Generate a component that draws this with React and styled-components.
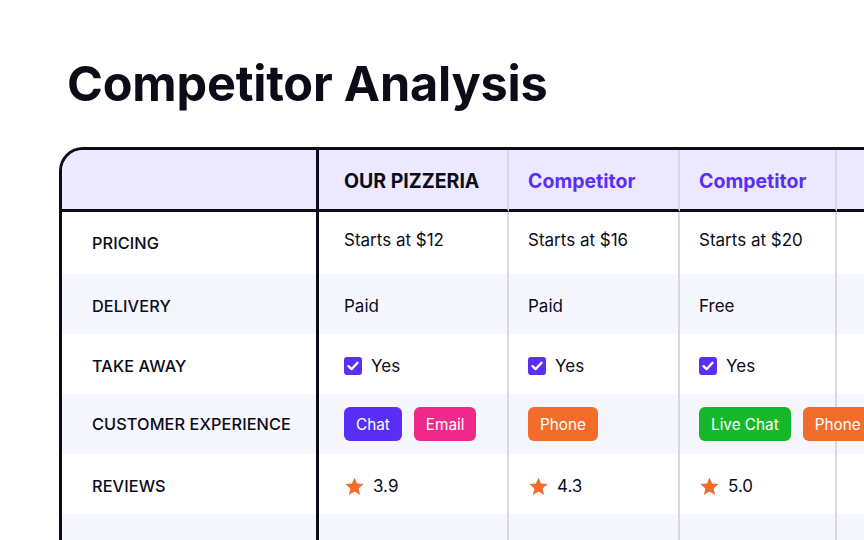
import React from "react";
import styled, { createGlobalStyle } from "styled-components";

const Global = createGlobalStyle`
  html, body { margin: 0; padding: 0; background: #ffffff; overflow: hidden; }
  body { font-family: Inter, "Noto Sans", sans-serif; color: #0c0c18; }
  * { box-sizing: border-box; }
`;

const Page = styled.div`
  width: 864px;
  height: 540px;
  overflow: hidden;
  padding: 55px 0 0 59px;
`;

const Title = styled.h1`
  margin: 0 0 0 8px;
  font-size: 48.6px;
  line-height: 58px;
  font-weight: 700;
  letter-spacing: -0.2px;
  color: #0c0c18;
`;

const Table = styled.div`
  margin-top: 34px;
  width: 1000px;
  border: 3px solid #0c0c18;
  border-right: none;
  border-bottom: none;
  border-top-left-radius: 24px;
  overflow: hidden;
  display: grid;
  grid-template-columns: 257px 190px 171px 157px 200px;
`;

const Cell = styled.div`
  height: ${(p) => p.$h}px;
  display: flex;
  align-items: center;
  gap: 12px;
  padding-left: ${(p) => p.$pad}px;
  padding-top: ${(p) => p.$shift || 0}px;
  background: ${(p) => (p.$head ? "#ece8ff" : p.$alt ? "#f6f6fe" : "#ffffff")};
  border-right: ${(p) => (p.$first ? "3px solid #0c0c18" : "2px solid #d8d8e2")};
  border-bottom: ${(p) => (p.$head ? "3px solid #0c0c18" : "none")};
  font-size: 17px;
  color: #0c0c18;
  white-space: nowrap;
`;

const Label = styled.span`
  font-weight: 500;
  font-size: 16.3px;
  letter-spacing: 0.1px;
`;

const HeadText = styled.span`
  font-weight: 700;
  font-size: 19.5px;
  margin-top: 2px;
  color: ${(p) => (p.$accent ? "#5a2ff5" : "#0c0c18")};
`;

const Value = styled.span`
  font-weight: 400;
  font-size: 17px;
  margin-top: ${(p) => (p.$up ? "-6px" : "0")};
`;

const Badge = styled.span`
  position: relative;
  z-index: 1;
  flex-shrink: 0;
  height: 34px;
  padding: 0 12px;
  border-radius: 6px;
  display: inline-flex;
  align-items: center;
  color: #ffffff;
  font-size: 15.3px;
  font-weight: 400;
  background: ${(p) => p.$color};
`;

const Check = styled.span`
  width: 18px;
  height: 18px;
  border-radius: 3px;
  background: #5a2ff5;
  display: inline-flex;
  align-items: center;
  justify-content: center;
  margin-right: -3px;
`;

const Rating = styled.span`
  display: inline-flex;
  align-items: center;
  gap: 8px;
  font-size: 17px;
`;

const CheckIcon = () => (
  <svg width="14" height="14" viewBox="0 0 14 14">
    <path d="M2.5 7.2 L5.6 10.2 L11.5 3.8" fill="none" stroke="#fff" strokeWidth="2.4" strokeLinecap="round" strokeLinejoin="round" />
  </svg>
);

const StarIcon = () => (
  <svg width="21" height="21" viewBox="0 0 24 24">
    <path d="M12 1.6 L14.9 8.6 L22.5 9.2 L16.7 14.2 L18.5 21.6 L12 17.6 L5.5 21.6 L7.3 14.2 L1.5 9.2 L9.1 8.6 Z" fill="#f26c2c" />
  </svg>
);

const PADS = [30, 25, 19, 19, 20];
const HEIGHTS = [62, 62, 60, 60, 60, 60, 60];

const colors = {
  Chat: "#5a2ff5",
  Email: "#f0288a",
  Phone: "#f26c2c",
  "Live Chat": "#16b82a",
};

const headers = [null, "OUR PIZZERIA", "Competitor", "Competitor", ""];

const rows = [
  { label: "PRICING", type: "text", shift: 0, values: ["Starts at $12", "Starts at $16", "Starts at $20", ""] },
  { label: "DELIVERY", type: "text", shift: 4, values: ["Paid", "Paid", "Free", ""] },
  { label: "TAKE AWAY", type: "check", shift: 4, values: ["Yes", "Yes", "Yes", ""] },
  { label: "CUSTOMER EXPERIENCE", type: "badges", shift: 0, values: [["Chat", "Email"], ["Phone"], ["Live Chat", "Phone"], []] },
  { label: "REVIEWS", type: "rating", shift: 4, values: ["3.9", "4.3", "5.0", ""] },
  { label: "", type: "text", shift: 0, values: ["", "", "", ""] },
];

function renderValue(type, v, up) {
  if (type === "text") return v ? <Value $up={up}>{v}</Value> : null;
  if (type === "check")
    return v ? (
      <>
        <Check><CheckIcon /></Check>
        <Value>{v}</Value>
      </>
    ) : null;
  if (type === "badges")
    return v.map((b, i) => (
      <Badge key={i} $color={colors[b]}>{b}</Badge>
    ));
  if (type === "rating")
    return v ? (
      <Rating>
        <StarIcon />
        {v}
      </Rating>
    ) : null;
  return null;
}

export default function App() {
  return (
    <>
      <Global />
      <Page>
        <Title>Competitor Analysis</Title>
        <Table>
          {headers.map((h, i) => (
            <Cell key={"h" + i} $head $first={i === 0} $pad={PADS[i]} $h={HEIGHTS[0]}>
              {h && <HeadText $accent={i > 1}>{h}</HeadText>}
            </Cell>
          ))}
          {rows.map((r, ri) => (
            <React.Fragment key={ri}>
              <Cell $first $alt={ri % 2 === 1} $pad={PADS[0]} $h={HEIGHTS[ri + 1]} $shift={r.shift}>
                <Label>{r.label}</Label>
              </Cell>
              {r.values.map((v, ci) => (
                <Cell key={ci} $alt={ri % 2 === 1} $pad={PADS[ci + 1]} $h={HEIGHTS[ri + 1]} $shift={r.shift}>
                  {renderValue(r.type, v, ri === 0)}
                </Cell>
              ))}
            </React.Fragment>
          ))}
        </Table>
      </Page>
    </>
  );
}
